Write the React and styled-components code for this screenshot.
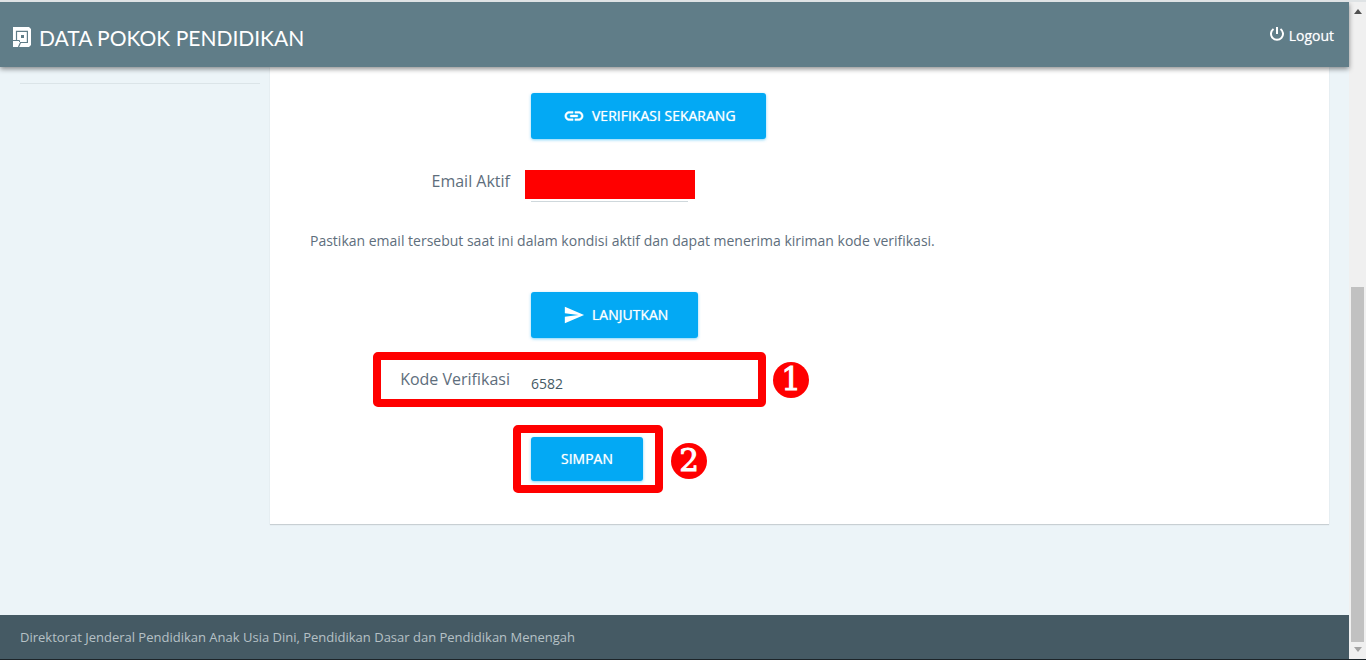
import React, { useState } from 'react';
import styled, { createGlobalStyle } from 'styled-components';

const GlobalStyle = createGlobalStyle`
  * {
    box-sizing: border-box;
  }

  body {
    margin: 0;
    background: #ecf4f8;
    color: #5e6e7c;
    font-family: 'Open Sans', sans-serif;
    font-size: 14px;
  }
`;

const Window = styled.div`
  display: flex;
  height: 100vh;
  overflow: hidden;
  border-top: 2px solid #dfe3e5;
  border-bottom: 1px solid #1c2429;
`;

const Page = styled.div`
  flex: 1;
  min-width: 0;
  display: flex;
  flex-direction: column;
`;

const Header = styled.header`
  display: flex;
  align-items: center;
  justify-content: space-between;
  height: 65px;
  padding: 0 15px 0 13px;
  background: #607d88;
  color: white;
  box-shadow: 0 2px 5px rgba(0, 0, 0, 0.45);
  z-index: 1;
`;

const Brand = styled.a`
  display: flex;
  align-items: center;
  gap: 8px;
  padding-top: 5px;
  color: white;
  font-family: Lato, sans-serif;
  font-size: 21px;
  text-decoration: none;
`;

const LogoutLink = styled.a`
  display: flex;
  align-items: center;
  gap: 4px;
  padding-top: 2px;
  color: white;
  font-size: 14px;
  text-decoration: none;
  text-shadow: 0 0 1px rgba(255, 255, 255, 0.6);

  svg {
    margin-bottom: 3px;
  }
`;

const Main = styled.div`
  flex: 1;
  display: flex;
  align-items: flex-start;
  padding-right: 20px;
`;

const Sidebar = styled.aside`
  width: 270px;
  padding: 16px 10px 0 20px;
`;

const Divider = styled.hr`
  margin: 0;
  border: 0;
  border-top: 1px solid #dbe4e8;
`;

const Card = styled.form`
  flex: 1;
  padding: 26px 40px 31px;
  background: white;
  box-shadow: 0 1px 1px rgba(0, 0, 0, 0.15);
`;

const FormRow = styled.div`
  display: grid;
  grid-template-columns: 200px 1fr;
  column-gap: 21px;
  align-items: start;
  margin-bottom: ${(props) => props.$gap}px;
`;

const Label = styled.label`
  color: #5e6e7c;
  font-size: 16px;
  line-height: 31px;
  text-align: right;
`;

const Field = styled.div`
  grid-column: 2;
  justify-self: start;
  position: relative;
`;

const Button = styled.button`
  display: flex;
  align-items: center;
  gap: 7px;
  height: ${(props) => (props.$plain ? 44 : 46)}px;
  padding: 0 30px 2px;
  border: none;
  border-radius: 3px;
  background: #03a9f4;
  color: white;
  font-family: inherit;
  font-size: 14px;
  text-transform: uppercase;
  text-shadow: 0 0 1px rgba(255, 255, 255, 0.8);
  box-shadow: 0 1px 3px rgba(3, 169, 244, 0.5);
  cursor: pointer;

  svg {
    margin: 2px 0 0 2px;
  }
`;

const Input = styled.input`
  display: block;
  width: ${(props) => props.$width}px;
  height: 36px;
  padding: 4px 0 0;
  border: none;
  border-bottom: 1px solid ${(props) => (props.$underline ? '#cfd8dc' : 'transparent')};
  background: transparent;
  color: #455a64;
  font-family: inherit;
  font-size: 14px;
  outline: none;
`;

const Note = styled.p`
  margin: 0 0 41px;
  font-size: 14px;
  line-height: 20px;
`;

const Redaction = styled.div`
  position: absolute;
  inset: 4px -7px 3px -6px;
  background: red;
`;

const Highlight = styled.div`
  position: absolute;
  inset: ${(props) => props.$inset};
  border: 8px solid red;
  border-radius: 5px;
  pointer-events: none;
`;

const Step = styled.span`
  position: absolute;
  top: ${(props) => props.$top}px;
  left: calc(100% + ${(props) => props.$offset}px);
  width: 36px;
  height: 36px;
  border-radius: 50%;
  background: red;
  color: white;
  font-family: 'DejaVu Serif', serif;
  font-size: 31px;
  line-height: 34px;
  text-align: center;
  -webkit-text-stroke: 1px white;
`;

const Footer = styled.footer`
  height: 44px;
  padding: 0 20px;
  background: #455a64;
  color: #b6c1c6;
  font-size: 13px;
  line-height: 44px;
`;

const Scrollbar = styled.div`
  display: flex;
  flex-direction: column;
  align-items: center;
  width: 17px;
  padding: 7px 0;
  background: #f0f0f0;
`;

const Track = styled.div`
  flex: 1;
  display: flex;
  flex-direction: column;
  justify-content: flex-end;
  padding: 5px 0;
`;

const Thumb = styled.div`
  width: 13px;
  height: 57%;
  background: #c1c1c1;
`;

const LogoIcon = () => (
  <svg width="18" height="20" viewBox="0 0 18 20" aria-hidden="true">
    <path fill="white" d="M0 0H16L18 2V18L16 20H0Z" />
    <path fill="none" stroke="#607d88" strokeWidth="1.2" d="M0 13.5H3.5V4.4H14.4V15.5H7.5L5.5 20" />
    <path fill="none" stroke="#607d88" strokeWidth="1" d="M3.5 13.5H6.5V15" />
    <path fill="#607d88" d="M8 8h3v3H8z" />
  </svg>
);

const PowerIcon = () => (
  <svg width="16" height="16" viewBox="0 0 16 16" fill="none" stroke="white" strokeWidth="2" aria-hidden="true">
    <path d="M8 1V8M4.5 3A6 6 0 1 0 11.5 3" />
  </svg>
);

const LinkIcon = () => (
  <svg width="22" height="22" viewBox="0 0 24 24" fill="white" stroke="white" strokeWidth="0.5" aria-hidden="true">
    <path d="M3.9 12c0-1.71 1.39-3.1 3.1-3.1h4V7H7c-2.76 0-5 2.24-5 5s2.24 5 5 5h4v-1.9H7c-1.71 0-3.1-1.39-3.1-3.1zM8 13h8v-2H8v2zm9-6h-4v1.9h4c1.71 0 3.1 1.39 3.1 3.1s-1.39 3.1-3.1 3.1h-4V17h4c2.76 0 5-2.24 5-5s-2.24-5-5-5z" />
  </svg>
);

const SendIcon = () => (
  <svg width="22" height="22" viewBox="0 0 24 24" fill="white" aria-hidden="true">
    <path d="M2.01 21L23 12 2.01 3 2 10l15 2-15 2z" />
  </svg>
);

const Arrow = ({ down }) => (
  <svg width="8" height="5" viewBox="0 0 8 5" aria-hidden="true">
    <path d={down ? 'M0 0H8L4 5Z' : 'M0 5H8L4 0Z'} fill={down ? '#a3a3a3' : '#505050'} />
  </svg>
);

function App() {
  const [email, setEmail] = useState('');
  const [code, setCode] = useState('6582');

  return (
    <>
      <GlobalStyle />
      <Window>
        <Page>
          <Header>
            <Brand href="#">
              <LogoIcon />
              DATA POKOK PENDIDIKAN
            </Brand>
            <LogoutLink href="#">
              <PowerIcon />
              Logout
            </LogoutLink>
          </Header>

          <Main>
            <Sidebar>
              <Divider />
            </Sidebar>
            <Card onSubmit={(e) => e.preventDefault()}>
              <FormRow $gap={27}>
                <Field>
                  <Button type="button">
                    <LinkIcon />
                    Verifikasi Sekarang
                  </Button>
                </Field>
              </FormRow>
              <FormRow $gap={29}>
                <Label htmlFor="email">Email Aktif</Label>
                <Field>
                  <Input
                    id="email"
                    type="email"
                    $width={157}
                    $underline
                    value={email}
                    onChange={(e) => setEmail(e.target.value)}
                  />
                  <Redaction />
                </Field>
              </FormRow>
              <Note>
                Pastikan email tersebut saat ini dalam kondisi aktif dan dapat menerima kiriman kode verifikasi.
              </Note>
              <FormRow $gap={26}>
                <Field>
                  <Button type="button">
                    <SendIcon />
                    Lanjutkan
                  </Button>
                </Field>
              </FormRow>
              <FormRow $gap={37}>
                <Label htmlFor="code">Kode Verifikasi</Label>
                <Field>
                  <Input
                    id="code"
                    type="text"
                    $width={220}
                    value={code}
                    onChange={(e) => setCode(e.target.value)}
                  />
                  <Highlight $inset="-12px -15px -7px -158px" />
                  <Step $top={-2} $offset={22}>
                    1
                  </Step>
                </Field>
              </FormRow>
              <FormRow $gap={12}>
                <Field>
                  <Button type="submit" $plain>
                    Simpan
                  </Button>
                  <Highlight $inset="-12px -20px -12px -18px" />
                  <Step $top={6} $offset={28}>
                    2
                  </Step>
                </Field>
              </FormRow>
            </Card>
          </Main>

          <Footer>Direktorat Jenderal Pendidikan Anak Usia Dini, Pendidikan Dasar dan Pendidikan Menengah</Footer>
        </Page>

        <Scrollbar>
          <Arrow />
          <Track>
            <Thumb />
          </Track>
          <Arrow down />
        </Scrollbar>
      </Window>
    </>
  );
}

export default App;
